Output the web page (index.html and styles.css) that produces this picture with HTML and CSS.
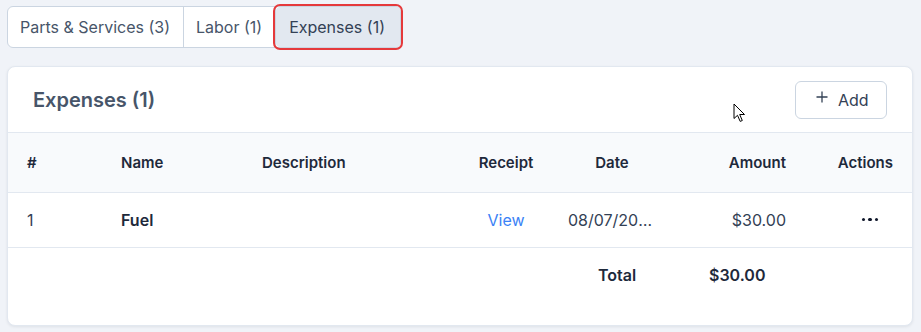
FILE: index.html
```html
<!DOCTYPE html>
<html lang="en">
<head>
<meta charset="utf-8">
<title>Expenses</title>
<link rel="stylesheet" href="styles.css">
</head>
<body>
  <div class="page">
    <nav class="tabs">
      <button class="tab">Parts &amp; Services (3)</button>
      <button class="tab">Labor (1)</button>
      <button class="tab active">Expenses (1)</button>
    </nav>

    <section class="card">
      <header class="card-head">
        <h2 class="title">Expenses (1)</h2>
        <button class="add-btn">
          <svg class="plus" width="12" height="12" viewBox="0 0 12 12" aria-hidden="true"><path d="M6 0.5v11M0.5 6h11" stroke="#334155" stroke-width="1.3" fill="none"/></svg>
          <span>Add</span>
        </button>
      </header>

      <div class="row thead">
        <div class="c c-num">#</div>
        <div class="c c-name">Name</div>
        <div class="c c-desc">Description</div>
        <div class="c c-receipt">Receipt</div>
        <div class="c c-date">Date</div>
        <div class="c c-amount">Amount</div>
        <div class="c c-actions">Actions</div>
      </div>

      <div class="row tbody">
        <div class="c c-num">1</div>
        <div class="c c-name strong">Fuel</div>
        <div class="c c-desc"></div>
        <div class="c c-receipt"><a class="link" href="#">View</a></div>
        <div class="c c-date"><span class="trunc" title="08/07/2024">08/07/2024</span></div>
        <div class="c c-amount">$30.00</div>
        <div class="c c-actions"><span class="dots"><i></i><i></i><i></i></span></div>
      </div>

      <div class="row tfoot">
        <div class="c"></div>
        <div class="c"></div>
        <div class="c"></div>
        <div class="c"></div>
        <div class="c c-date total-label">Total</div>
        <div class="c total-amount">$30.00</div>
        <div class="c"></div>
      </div>
    </section>

    <svg class="cursor" width="13" height="20" viewBox="0 0 13 20" aria-hidden="true">
      <path d="M1 1 L1 15.5 L4.5 12.3 L7.2 18.4 L9.3 17.5 L6.7 11.5 L11.5 11.5 Z" fill="#fff" stroke="#000" stroke-width="1" stroke-linejoin="round"/>
    </svg>
  </div>
</body>
</html>
```

FILE: styles.css
```css
* { box-sizing: border-box; }

html, body {
  margin: 0;
  padding: 0;
  background: #f0f3f8;
  font-family: Inter, "Noto Sans", "Liberation Sans", sans-serif;
  color: #334155;
}

.page {
  position: relative;
  width: 921px;
  height: 332px;
  padding: 6px 7px 0 7px;
}

.tabs {
  display: inline-flex;
  height: 42px;
  background: #fff;
  border: 1px solid #cbd5e1;
  border-radius: 6px;
}

.tab {
  font: inherit;
  font-size: 16px;
  color: #475569;
  background: transparent;
  border: 0;
  border-right: 1px solid #cbd5e1;
  padding: 0 13px 0 12px;
  height: 40px;
  line-height: 40px;
  cursor: pointer;
}

.tab:last-child { border-right: 0; }

.tab.active {
  background: #e2e8f0;
  color: #334155;
  border-radius: 4px;
  outline: 2px solid #e5393b;
  outline-offset: 1px;
  margin-left: 0;
  padding: 0 15px 0 13px;
}

.card {
  margin-top: 18px;
  width: 906px;
  height: 260px;
  background: #fff;
  border: 1px solid #e2e8f0;
  border-radius: 8px;
  box-shadow: 0 1px 3px rgba(15, 23, 42, 0.08);
  overflow: hidden;
}

.card-head {
  display: flex;
  align-items: center;
  justify-content: space-between;
  height: 66px;
  padding: 0 25px;
  border-bottom: 1px solid #e2e8f0;
}

.title {
  margin: 0;
  font-size: 20px;
  font-weight: 600;
  color: #475569;
}

.add-btn {
  display: flex;
  align-items: center;
  gap: 10px;
  height: 38px;
  width: 92px;
  padding: 0 0 0 20px;
  font: inherit;
  font-size: 16px;
  color: #334155;
  background: #fff;
  border: 1px solid #cbd5e1;
  border-radius: 6px;
}

.plus { position: relative; top: -3px; }

.row {
  display: grid;
  grid-template-columns: 99px 141px 202px 112px 100px 138px 112px;
  align-items: center;
  font-size: 15px;
}

.c { min-width: 0; }

.thead {
  height: 60px;
  background: #f8fafc;
  border-bottom: 1px solid #e2e8f0;
  font-weight: 600;
  color: #1e293b;
}

.tbody {
  height: 55px;
  border-bottom: 1px solid #e2e8f0;
  font-size: 16px;
  color: #334155;
}

.tfoot {
  height: 54px;
  font-size: 16px;
  font-weight: 600;
  color: #1e293b;
}

.c-num { padding-left: 19px; }
.c-name, .c-desc { padding-left: 14px; }
.c-receipt { text-align: center; }
.c-date { text-align: center; padding: 0 6px; }
.c-amount { text-align: right; padding-right: 14px; }
.c-actions {
  display: flex;
  justify-content: flex-end;
  align-items: center;
  padding-right: 19px;
}

.strong { font-weight: 600; color: #1e293b; }

.link { color: #3b82f6; text-decoration: none; }

.trunc {
  display: block;
  overflow: hidden;
  white-space: nowrap;
  text-overflow: ellipsis;
}

.dots {
  display: flex;
  gap: 3px;
  margin-right: 15px;
  margin-top: -1px;
}

.dots i {
  display: block;
  width: 3.5px;
  height: 3.5px;
  border-radius: 50%;
  background: #0f172a;
}

.total-label { padding-left: 16px; }
.total-amount { padding-left: 47px; }

.cursor {
  position: absolute;
  left: 733px;
  top: 103px;
}
```
